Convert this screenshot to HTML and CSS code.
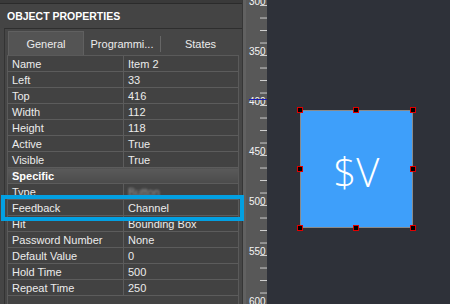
FILE: index.html
```html
<!DOCTYPE html>
<html lang="en">
<head>
  <meta charset="UTF-8">
  <title>Object Properties</title>
  <link rel="stylesheet" href="styles.css">
</head>
<body>
  <div class="side">
    <div class="topstrip"></div>
    <div class="title">OBJECT PROPERTIES</div>
    <div class="panel">
      <div class="tabs">
        <div class="tab active">General</div>
        <div class="tab">Programmi...</div>
        <div class="tab last">States</div>
      </div>
      <div class="grid">
        <table class="props">
          <tr><td class="key">Name</td><td>Item 2</td></tr>
          <tr><td class="key">Left</td><td>33</td></tr>
          <tr><td class="key">Top</td><td>416</td></tr>
          <tr><td class="key">Width</td><td>112</td></tr>
          <tr><td class="key">Height</td><td>118</td></tr>
          <tr><td class="key">Active</td><td>True</td></tr>
          <tr><td class="key">Visible</td><td>True</td></tr>
          <tr class="group"><td colspan="2">Specific</td></tr>
          <tr><td class="key">Type</td><td><span class="blurred">Button</span></td></tr>
          <tr><td class="key">Feedback</td><td>Channel</td></tr>
          <tr><td class="key">Hit</td><td>Bounding Box</td></tr>
          <tr><td class="key">Password Number</td><td>None</td></tr>
          <tr><td class="key">Default Value</td><td>0</td></tr>
          <tr><td class="key">Hold Time</td><td>500</td></tr>
          <tr><td class="key">Repeat Time</td><td>250</td></tr>
        </table>
      </div>
    </div>
    <div class="highlight"></div>
  </div>
  <div class="split"></div>
  <div class="ruler">
    <div class="mark first">300</div>
    <div class="mark">350</div>
    <div class="mark">400</div>
    <div class="mark">450</div>
    <div class="mark">500</div>
    <div class="mark">550</div>
    <div class="mark">600</div>
    <div class="pos"></div>
  </div>
  <div class="canvas">
    <div class="item">
      <span class="caption">$V</span>
      <i class="h tl"></i><i class="h tc"></i><i class="h tr"></i>
      <i class="h ml"></i><i class="h mr"></i>
      <i class="h bl"></i><i class="h bc"></i><i class="h br"></i>
    </div>
  </div>
</body>
</html>
```

FILE: styles.css
```css
body {
  margin: 0;
  width: 450px;
  height: 304px;
  overflow: hidden;
  display: flex;
  font-family: "Liberation Sans", Arial, sans-serif;
  font-size: 11px;
  color: #ececec;
  background-color: #2e3139;
}

.side {
  position: relative;
  width: 242px;
  display: flex;
  flex-direction: column;
  background-color: #454545;
}

.topstrip {
  height: 3px;
  background-color: #3a3a3a;
  border-bottom: 1px solid #2b2b2b;
}

.title {
  height: 24px;
  line-height: 25px;
  padding-left: 7px;
  font-size: 10.5px;
  font-weight: bold;
  color: #fff;
  background-color: #444;
}

.panel {
  flex: 1;
  display: flex;
  flex-direction: column;
  margin-left: 4px;
  padding: 2px 2px 0 2px;
  border-top: 1px solid #2e2e2e;
  border-left: 1px solid #333;
  background-color: #464646;
}

.tabs {
  display: flex;
  height: 24px;
}

.tab {
  width: 76px;
  text-align: center;
  line-height: 26px;
  white-space: nowrap;
}

.tab.active {
  width: 74px;
  margin-left: 1px;
  background-color: #545454;
  border: 1px solid #606060;
  border-bottom: none;
  line-height: 24px;
}

.tab.last {
  flex: 1;
  border-left: 1px solid #666;
  margin: 5px 0 3px;
  line-height: 16px;
}

.grid {
  flex: 1;
  border-left: 1px solid #5a5a5a;
  border-right: 1px solid #5a5a5a;
  border-top: 1px solid #5a5a5a;
  margin-right: 1px;
  background-color: #434343;
}

.props {
  width: 100%;
  border-collapse: collapse;
  table-layout: fixed;
}

.props td {
  height: 13px;
  padding: 2px 4px 0;
  line-height: 13px;
  border: 1px solid #5c5c5c;
  border-top: none;
  white-space: nowrap;
  overflow: hidden;
  background-color: #424242;
}

.props tr td:first-child {
  border-left: none;
}

.props tr td:last-child {
  border-right: none;
}

.props td.key {
  width: 107px;
}

.props .group td {
  font-weight: bold;
  color: #fff;
  background: linear-gradient(#5a5a5a, #4b4b4b);
}

.blurred {
  color: #9a9a9a;
  filter: blur(1px);
}

.highlight {
  position: absolute;
  left: 1px;
  top: 195px;
  width: 235px;
  height: 18px;
  border: 4px solid #03a0e2;
}

.split {
  width: 4px;
  background: linear-gradient(to right, #363636 0, #363636 1px, #616161 1px, #616161 4px);
}

.ruler {
  position: relative;
  width: 21px;
  background-color: #585858;
  background-image: linear-gradient(to bottom, transparent 12px, #d0d0d0 12px, #d0d0d0 13px, transparent 13px);
  background-size: 7px 12.5px;
  background-repeat: repeat-y;
  background-position: right 0 top -6.5px;
  color: #f4f4f4;
  font-size: 10px;
  overflow: hidden;
}

.mark {
  height: 50px;
  display: flex;
  align-items: flex-end;
  padding-left: 3px;
  line-height: 8px;
}

.mark.first {
  margin-top: -44px;
}

.pos {
  position: absolute;
  left: 3px;
  right: 0;
  top: 99px;
  height: 1px;
  background-color: #1a1ab0;
}

.canvas {
  position: relative;
  flex: 1;
  background-color: #2e3139;
}

.item {
  position: absolute;
  left: 33px;
  top: 110px;
  width: 111px;
  height: 116px;
  border: 1px solid #8a8a8a;
  background-color: #3e9ffa;
  display: flex;
  align-items: center;
  justify-content: center;
}

.caption {
  font-family: "Open Sans", sans-serif;
  font-weight: 300;
  font-size: 40px;
  color: #fff;
  margin-top: 4px;
}

.h {
  position: absolute;
  width: 4px;
  height: 4px;
  background-color: #000;
  border: 1px solid #e00000;
}

.tl, .tc, .tr { top: -4px; }
.ml, .mr { top: 55px; }
.bl, .bc, .br { bottom: -4px; }
.tl, .ml, .bl { left: -4px; }
.tc, .bc { left: 52px; }
.tr, .mr, .br { right: -4px; }
```
